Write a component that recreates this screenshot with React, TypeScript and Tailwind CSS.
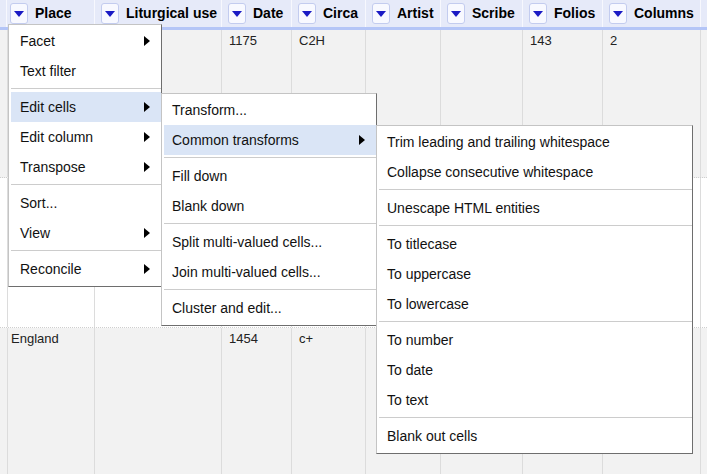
import React from 'react'

const COLS = 'grid grid-cols-[4px_91px_127px_70px_74px_75px_82px_80px_98px_6px]'

const HEADERS = ['', 'Place', 'Liturgical use', 'Date', 'Circa', 'Artist', 'Scribe', 'Folios', 'Columns', '']

type Row = { cells: string[]; bg: string; h: string }

const ROWS: Row[] = [
  { cells: ['', '', '', '1175', 'C2H', '', '', '143', '2', ''], bg: 'bg-[#f2f2f2]', h: 'h-[148px]' },
  { cells: ['', '', '', '', '', '', '', '', '', ''], bg: 'bg-white', h: 'h-[150px]' },
  { cells: ['', 'England', '', '1454', 'c+', '', '', '', '', ''], bg: 'bg-[#f2f2f2]', h: 'h-[160px]' },
]

type Item = { label?: string; sub?: boolean; active?: boolean; sep?: boolean }

const MENU_1: Item[] = [
  { label: 'Facet', sub: true },
  { label: 'Text filter' },
  { sep: true },
  { label: 'Edit cells', sub: true, active: true },
  { label: 'Edit column', sub: true },
  { label: 'Transpose', sub: true },
  { sep: true },
  { label: 'Sort...' },
  { label: 'View', sub: true },
  { sep: true },
  { label: 'Reconcile', sub: true },
]

const MENU_2: Item[] = [
  { label: 'Transform...' },
  { label: 'Common transforms', sub: true, active: true },
  { sep: true },
  { label: 'Fill down' },
  { label: 'Blank down' },
  { sep: true },
  { label: 'Split multi-valued cells...' },
  { label: 'Join multi-valued cells...' },
  { sep: true },
  { label: 'Cluster and edit...' },
]

const MENU_3: Item[] = [
  { label: 'Trim leading and trailing whitespace' },
  { label: 'Collapse consecutive whitespace' },
  { sep: true },
  { label: 'Unescape HTML entities' },
  { sep: true },
  { label: 'To titlecase' },
  { label: 'To uppercase' },
  { label: 'To lowercase' },
  { sep: true },
  { label: 'To number' },
  { label: 'To date' },
  { label: 'To text' },
  { sep: true },
  { label: 'Blank out cells' },
]

function DropButton() {
  return (
    <span className="shrink-0 w-[18px] h-[21px] rounded-[3px] border border-[#c3ccef] bg-[#f8f9ff] flex items-center justify-center">
      <span className="w-0 h-0 border-x-[5px] border-x-transparent border-t-[6px] border-t-[#1a1ac4]" />
    </span>
  )
}

function Menu({ items, className, pad }: { items: Item[]; className: string; pad: string }) {
  return (
    <div
      className={`absolute bg-white border border-[#c4c4c4] border-r-[#6e6e6e] border-b-[#6e6e6e] pt-px pb-[2px] pl-[2px] ${className}`}
    >
      {items.map((it, i) =>
        it.sep ? (
          <div key={i} className="mt-[2px] mb-[3px] border-t border-[#cccccc]" />
        ) : (
          <div
            key={i}
            className={`h-[30px] flex items-center justify-between pr-[11px] ${pad} ${it.active ? 'bg-[#dae5f6]' : ''}`}
          >
            <span className="text-[14px] text-[#111]">{it.label}</span>
            {it.sub && (
              <span className="w-0 h-0 border-y-[5px] border-y-transparent border-l-[6px] border-l-black" />
            )}
          </div>
        )
      )}
    </div>
  )
}

export default function App() {
  return (
    <div className="relative w-[707px] h-[474px] overflow-hidden bg-white font-['Liberation_Sans',Arial,sans-serif]">
      {/* Column headers */}
      <div className={`${COLS} h-[30px] bg-[#e6eaf9] border-b-[3px] border-[#b4c5f7]`}>
        {HEADERS.map((h, i) => (
          <div
            key={i}
            className="border-r border-[#f7f8fe] flex items-center gap-[7px] pl-[6px] overflow-hidden whitespace-nowrap"
          >
            {h && <DropButton />}
            {h && <span className="text-[14px] font-bold text-black">{h}</span>}
          </div>
        ))}
      </div>

      {/* Data rows */}
      {ROWS.map((row, r) => (
        <div key={r} className={`${COLS} ${row.h} ${row.bg} border-b border-dotted border-[#cfcfcf]`}>
          {row.cells.map((c, i) => (
            <div key={i} className="border-r border-[#dcdcdc] pl-[7px] pt-[3px] text-[13px] text-[#222] leading-[16px]">
              {c}
            </div>
          ))}
        </div>
      ))}

      {/* Context menus */}
      <Menu items={MENU_1} pad="pl-[9px]" className="left-[8px] top-[24px] w-[154px]" />
      <Menu items={MENU_2} pad="pl-[8px]" className="left-[161px] top-[93px] w-[216px]" />
      <Menu items={MENU_3} pad="pl-[8px]" className="left-[376px] top-[125px] w-[317px]" />
    </div>
  )
}
